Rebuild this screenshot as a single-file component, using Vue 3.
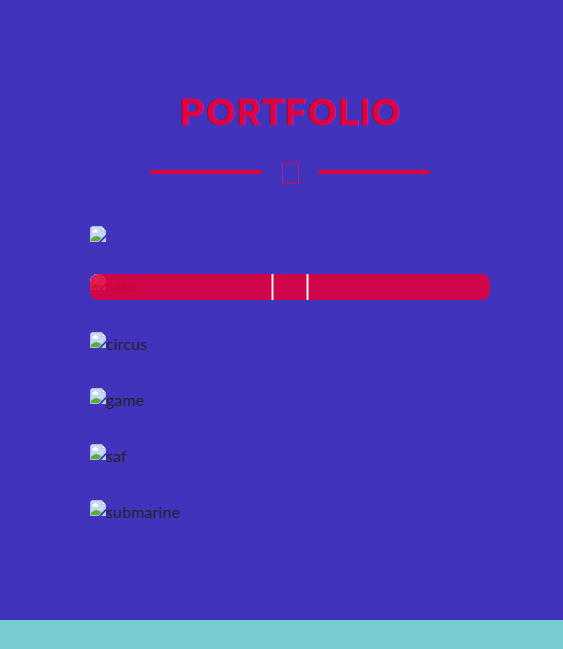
<script setup>
const letters = [
  { char: 'P', width: 26, scale: 1.1 },
  { char: 'O', width: 31, scale: 1.1 },
  { char: 'R', width: 25, scale: 1.03 },
  { char: 'T', width: 24, scale: 1.03 },
  { char: 'F', width: 21, scale: 1.03 },
  { char: 'O', width: 32, scale: 1.1 },
  { char: 'L', width: 22, scale: 1.08 },
  { char: 'I', width: 10, scale: 1 },
  { char: 'O', width: 31, scale: 1.1 },
]
const items = [
  { name: '', kind: 'bare' },
  { name: 'cake', kind: 'hovered' },
  { name: 'circus', kind: 'plain' },
  { name: 'game', kind: 'plain' },
  { name: 'saf', kind: 'plain' },
  { name: 'submarine', kind: 'plain' },
]
</script>

<template>
  <section class="portfolio">
    <h2 class="title">
      <span
        v-for="(letter, i) in letters"
        :key="i"
        class="letter"
        :style="{ width: letter.width + 'px', transform: `scaleX(${letter.scale})` }"
      >{{ letter.char }}</span>
    </h2>
    <div class="divider">
      <i class="line"></i>
      <i class="glyph"></i>
      <i class="line"></i>
    </div>
    <div class="items">
      <div v-for="item in items" :key="item.kind + item.name" class="item" :class="item.kind">
        <svg class="thumb" width="16" height="16" viewBox="0 0 16 16">
          <path d="M0 0H11.5L16 4.5V8.5L8.5 16H0Z" fill="#c6d8f3" />
          <path d="M1 15V13Q4 9.5 7.5 10.2L11.5 12L8.5 15Z" fill="#55ae38" />
          <path d="M2.5 6.5Q2 4.6 4 4.3Q5.5 2 7 4Q8.8 4.6 8 6.5Z" fill="#fff" />
          <path d="M16 11V16H11Z" fill="#b9cde0" />
          <path d="M.5 16V.5H11.5M15.5 4.5V8.5M0 15.5H8.5" fill="none" stroke="#b0b6c6" stroke-opacity=".8" />
          <path d="M11.5 .5V4.5H15.5Z" fill="#fff" stroke="#b0b6c6" stroke-width=".7" />
        </svg>
        <span class="name">{{ item.name }}</span>
        <div v-if="item.kind === 'hovered'" class="caption">
          <div class="mark"><i class="bar"></i><i class="bar"></i></div>
        </div>
      </div>
    </div>
  </section>
  <footer class="footer"></footer>
</template>

<style>
body {
  margin: 0;
}
</style>

<style scoped>
.portfolio {
  box-sizing: border-box;
  height: 620px;
  padding: 88px 73px 0 90px;
  background: #4133bb;
  font: 16px/24px Lato, sans-serif;
  color: #212529;
}
.title {
  display: flex;
  justify-content: center;
  margin: 0;
  height: 48px;
  font: 700 35px/48px Inter, sans-serif;
  color: #e4003a;
  -webkit-text-stroke: 0.3px #e4003a;
}
.letter {
  display: flex;
  justify-content: center;
  flex: none;
}
.divider {
  display: flex;
  justify-content: center;
  align-items: center;
  height: 22px;
  margin-top: 27px;
}
.line {
  width: 112px;
  height: 4px;
  border-radius: 4px;
  background: #e4003a;
  margin-top: -5px;
}
.glyph {
  box-sizing: border-box;
  width: 17px;
  height: 21px;
  margin: -2px 19px 0 20px;
  border: 1px solid #e4003a;
  border-left-color: #b51c91;
  border-right-color: #b51c91;
}
.items {
  display: flex;
  flex-direction: column;
  gap: 32px;
  margin-top: 41px;
}
.item {
  position: relative;
  display: flex;
  height: 24px;
}
.bare {
  height: 16px;
}
.hovered {
  height: 26px;
  border-radius: 8px;
  overflow: hidden;
}
.thumb {
  display: block;
  flex: none;
  border-radius: 4px 0 0 0;
}
.name {
  letter-spacing: 0.14px;
}
.caption {
  position: absolute;
  inset: 0;
  display: flex;
  justify-content: center;
  border-radius: 8px;
  background: rgba(228, 0, 58, 0.88);
}
.mark {
  display: flex;
  justify-content: space-between;
  width: 38px;
}
.bar {
  box-sizing: border-box;
  width: 3px;
  border: solid rgba(255, 255, 255, 0.45);
  border-width: 0 1px;
  background: #fff;
  background-clip: padding-box;
}
.footer {
  height: 29px;
  background: #78cdd1;
}
</style>
